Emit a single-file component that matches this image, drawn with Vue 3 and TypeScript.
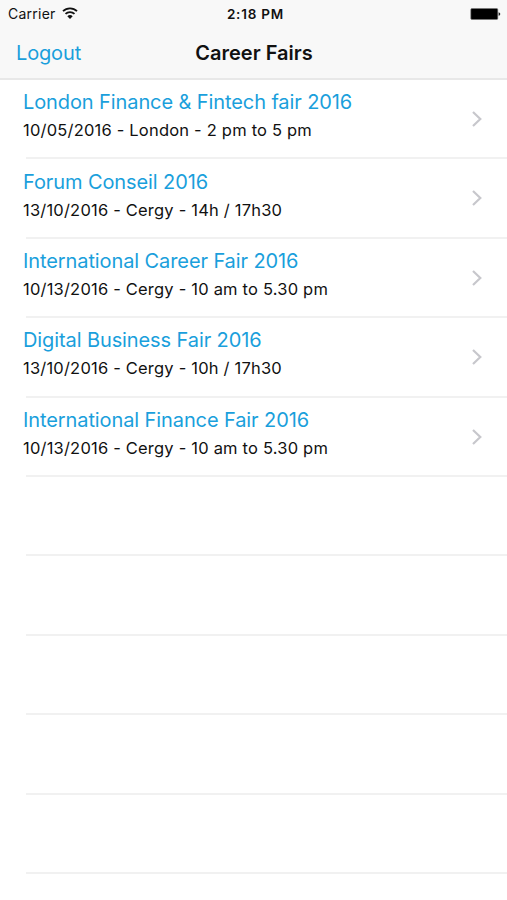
<script setup lang="ts">
interface Fair {
  title: string
  detail: string
}

const fairs: Fair[] = [
  { title: 'London Finance & Fintech fair 2016', detail: '10/05/2016 - London - 2 pm to 5 pm' },
  { title: 'Forum Conseil 2016', detail: '13/10/2016 - Cergy - 14h / 17h30' },
  { title: 'International Career Fair 2016', detail: '10/13/2016 - Cergy - 10 am to 5.30 pm' },
  { title: 'Digital Business Fair 2016', detail: '13/10/2016 - Cergy - 10h / 17h30' },
  { title: 'International Finance Fair 2016', detail: '10/13/2016 - Cergy - 10 am to 5.30 pm' },
]
const emptyRows = 5
</script>

<template>
  <main class="screen">
    <header class="top">
      <div class="status">
        <div class="carrier">
          <span>Carrier</span>
          <svg class="wifi" viewBox="0 0 16 12" width="16" height="12">
            <path d="M1 4.2a10 10 0 0 1 14 0M3.5 6.9a6.4 6.4 0 0 1 9 0" fill="none" stroke="#111" stroke-width="1.8" />
            <path d="M5.3 9.3a3.9 3.9 0 0 1 5.4 0L8 12z" fill="#111" />
          </svg>
        </div>
        <span class="clock">2:18 PM</span>
        <svg class="battery" viewBox="0 0 31 12" width="31" height="12">
          <rect x="0.8" y="0.5" width="27" height="11" rx="1.2" fill="#000" stroke="#777" stroke-width="0.6" />
          <path d="M28.6 4.2q1.7 .4 1.7 1.8t-1.7 1.8z" fill="#222" />
        </svg>
      </div>
      <nav class="nav">
        <a class="logout">Logout</a>
        <h1 class="heading">Career Fairs</h1>
      </nav>
    </header>
    <ul class="list">
      <li v-for="fair in fairs" :key="fair.title" class="row">
        <div class="text">
          <span class="title">{{ fair.title }}</span>
          <span class="detail">{{ fair.detail }}</span>
        </div>
        <svg class="chevron" viewBox="0 0 12 18" width="12" height="18">
          <path d="M2 2l7.3 7L2 16" fill="none" stroke="#c7c7cc" stroke-width="2.2" />
        </svg>
      </li>
      <li v-for="n in emptyRows" :key="n" class="row"></li>
    </ul>
  </main>
</template>

<style>
body {
  background: #fff;
}
</style>

<style scoped>
.screen {
  height: 900px;
  overflow: hidden;
  background: #fff;
  color: #111;
  font-family: Inter, "Liberation Sans", sans-serif;
}
.top {
  box-sizing: border-box;
  height: 80px;
  background: #f8f8f8;
  border-bottom: 2px solid #e8e8e8;
}
.status {
  display: grid;
  grid-template-columns: 1fr auto 1fr;
  align-items: center;
  height: 27px;
  padding: 0 6px 0 8px;
  font-size: 14px;
}
.carrier {
  display: flex;
  align-items: center;
  gap: 6px;
  letter-spacing: 0.25px;
}
.wifi {
  margin-top: -2px;
}
.clock {
  padding-left: 2px;
  font-size: 13.5px;
  font-weight: 600;
  letter-spacing: 0.8px;
}
.battery {
  justify-self: end;
}
.nav {
  display: grid;
  grid-template-columns: 1fr auto 1fr;
  align-items: center;
  height: 52px;
  padding: 0 15px 0 16px;
}
.logout {
  color: #1a9fdc;
  font-size: 20px;
  letter-spacing: -0.15px;
}
.heading {
  margin: 0;
  font-size: 20px;
  font-weight: 600;
}
.list {
  margin: 0;
  padding: 0 0 0 26px;
  list-style: none;
}
.row {
  display: flex;
  box-sizing: border-box;
  height: 79.4px;
  justify-content: space-between;
  padding-right: 24px;
  border-bottom: 2px solid #f1f1f1;
}
.text {
  display: flex;
  flex-direction: column;
  margin-left: -3px;
  padding-top: 8.3px;
  white-space: nowrap;
}
.title {
  color: #1a9fdc;
  font-size: 20px;
  line-height: 28px;
  letter-spacing: -0.1px;
}
.detail {
  font-size: 16.5px;
  line-height: 29px;
  letter-spacing: 0.2px;
}
.chevron {
  margin-top: 30px;
}
</style>
